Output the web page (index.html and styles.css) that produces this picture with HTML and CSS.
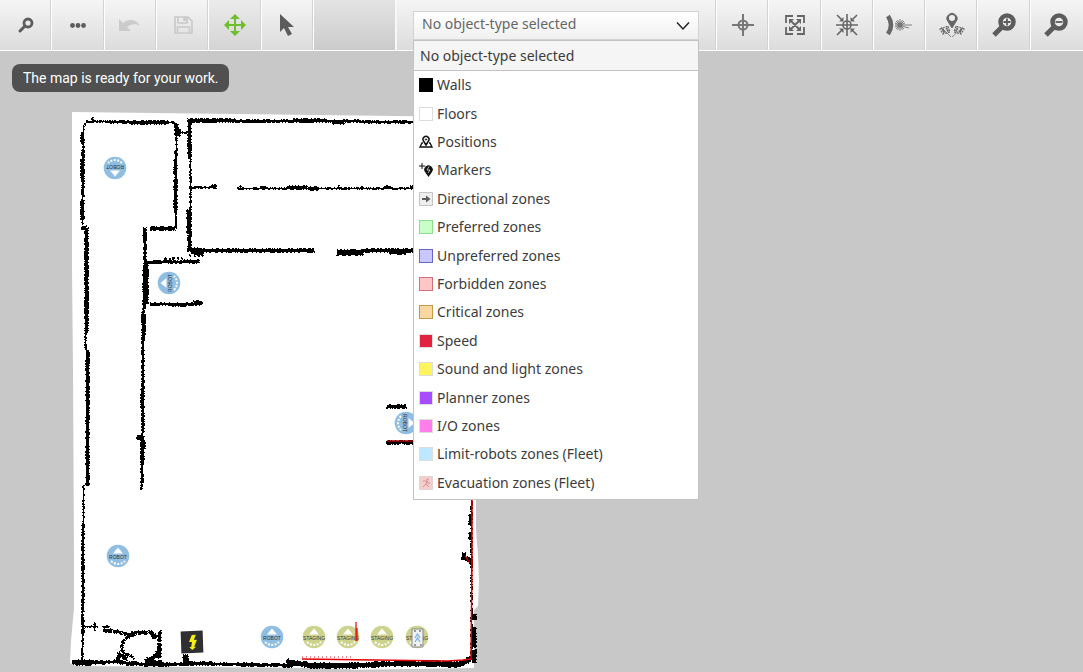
FILE: index.html
```html
<!DOCTYPE html>
<html lang="en">
<head>
<meta charset="utf-8">
<title>Map editor</title>
<link rel="stylesheet" href="styles.css">
</head>
<body>
<header class="toolbar">
  <div class="tools tools-left">
    <button class="tool" aria-label="Search"><svg width="32" height="32" viewBox="0 0 32 32"><circle cx="18" cy="14" r="4" fill="none" stroke="#5c5c5c" stroke-width="2.8"/><path d="M15 17l-5 5" stroke="#5c5c5c" stroke-width="3" stroke-linecap="round"/></svg></button>
    <button class="tool" aria-label="More"><svg width="32" height="32" viewBox="0 0 32 32" fill="#5c5c5c"><circle cx="10.500" cy="16.500" r="2.400"/><circle cx="16" cy="16.500" r="2.400"/><circle cx="21.500" cy="16.500" r="2.400"/></svg></button>
    <button class="tool" aria-label="Undo" disabled><svg width="32" height="32" viewBox="0 0 32 32" fill="#cbcbcb"><path d="M5 10v12h12l-4-4c3-3 9-4 13-1-3-7-12-8-17-3z"/></svg></button>
    <button class="tool" aria-label="Save" disabled><svg width="32" height="32" viewBox="0 0 32 32" fill="none" stroke="#c9c9c9" stroke-width="1.600"><path d="M8 8h13l4 4v12H8zM11 8v6h9V8M10.500 24v-6h12v6"/><path d="M17.500 8v4" stroke-width="2.500"/></svg></button>
    <button class="tool tool-active" aria-label="Pan"><svg width="32" height="32" viewBox="0 0 32 32"><path d="M16 8v16M8 16h16" stroke="#6fbe2e" stroke-width="2"/><path d="M16 5l-5 5h10zM16 27l-5-5h10zM5 16l5-5v10zM27 16l-5-5v10z" fill="#6fbe2e"/></svg></button>
    <button class="tool" aria-label="Select"><svg width="32" height="32" viewBox="0 0 32 32"><path d="M9 5v18l4-4 4 8 4-2-4-7h6z" fill="#5c5c5c"/></svg></button>
  </div>
  <div class="filler"></div>
  <div class="picker-area">
    <div class="picker">
      <select class="picker-select" aria-label="Object type"><option>No object-type selected</option></select>
      <svg class="chevron" width="14" height="10" viewBox="0 0 14 10"><path d="M1 1.500l6 6.500 6-6.500" fill="none" stroke="#222" stroke-width="1.500"/></svg>
      <div class="menu" role="listbox" aria-label="Object types">
        <div class="menu-head" role="option" aria-selected="true">No object-type selected</div>
        <div class="menu-rows">
          <div class="row" role="option"><span class="swatch walls"></span>Walls</div>
          <div class="row" role="option"><span class="swatch floors"></span>Floors</div>
          <div class="row" role="option"><svg class="glyph" width="14" height="14" viewBox="0 0 14 14" fill="none" stroke="#111"><path d="M4 8H3l-2 4h12l-2-4h-1" stroke-width="1.300"/><path d="M7 10L4.500 6a3 3 0 1 1 5 0z" stroke-width="1.500"/><circle cx="7" cy="4.500" r=".7"/></svg>Positions</div>
          <div class="row" role="option"><svg class="glyph" width="14" height="14" viewBox="0 0 14 14"><path d="M9.500 14L6 9a4.200 4.200 0 1 1 7 0z" fill="#111"/><path d="M0 3h6M3 0v6" stroke="#111"/><path d="M10 3.500L8 7h3L9 10" fill="none" stroke="#fff" stroke-width=".7"/></svg>Markers</div>
          <div class="row" role="option"><svg class="glyph" width="14" height="14" viewBox="0 0 14 14"><path d="M.5.5h13v13H.5z" fill="#eee" stroke="#c4c4c4"/><path d="M3 6h4V3.500L11.500 7 7 10.500V8H3z" fill="#5c5c5c"/></svg>Directional zones</div>
          <div class="row" role="option"><span class="swatch preferred"></span>Preferred zones</div>
          <div class="row" role="option"><span class="swatch unpreferred"></span>Unpreferred zones</div>
          <div class="row" role="option"><span class="swatch forbidden"></span>Forbidden zones</div>
          <div class="row" role="option"><span class="swatch critical"></span>Critical zones</div>
          <div class="row" role="option"><span class="swatch speed"></span>Speed</div>
          <div class="row" role="option"><span class="swatch sound"></span>Sound and light zones</div>
          <div class="row" role="option"><span class="swatch planner"></span>Planner zones</div>
          <div class="row" role="option"><span class="swatch io"></span>I/O zones</div>
          <div class="row" role="option"><span class="swatch limit"></span>Limit-robots zones (Fleet)</div>
          <div class="row" role="option"><svg class="glyph" width="14" height="14" viewBox="0 0 14 14"><path d="M.5.5h13v13H.5z" fill="#f4cdcd" stroke="#e3d3d3"/><circle cx="8.500" cy="3.500" r="1" fill="#dd8d8d"/><path d="M4 5l4 0-1 3 3 3M7 8l-3 3M8 5l1 2h2" fill="none" stroke="#dd8d8d"/></svg>Evacuation zones (Fleet)</div>
        </div>
      </div>
    </div>
  </div>
  <div class="tools tools-right">
    <button class="tool" aria-label="Center"><svg width="32" height="32" viewBox="0 0 32 32" fill="none" stroke="#777" stroke-width="2"><circle cx="16" cy="16" r="4.500"/><path d="M16 5v22M5 16h22"/></svg></button>
    <button class="tool" aria-label="Fit map"><svg width="32" height="32" viewBox="0 0 32 32"><path d="M14 7H7v7M18 7h7v7M14 25H7v-7M18 25h7v-7M12 12l8 8M20 12l-8 8" fill="none" stroke="#666" stroke-width="1.800"/><path d="M10 10h5l-5 5zM22 10h-5l5 5zM10 22h5l-5-5zM22 22h-5l5-5z" fill="#666"/></svg></button>
    <button class="tool" aria-label="Center on robot"><svg width="32" height="32" viewBox="0 0 32 32"><g fill="none" stroke="#666" stroke-width="1.600"><circle cx="16" cy="16" r="4"/><path d="M16 5v22M5 16h22M6 6l5 5M26 6l-5 5M6 26l5-5M26 26l-5-5"/></g><path d="M12.500 12.500H8l4.500-4.500zM19.500 12.500H24L19.500 8zM12.500 19.500H8l4.500 4.500zM19.500 19.500H24L19.500 24z" fill="#666"/></svg></button>
    <button class="tool" aria-label="Laser"><svg width="32" height="32" viewBox="0 0 32 32" fill="none" stroke="#666"><path d="M5 7q6 9 0 18" stroke-width="4.500"/><path d="M12 16h17M17 10v12M13 12l8 8M21 12l-8 8M14.500 11l5 10M19.500 11l-5 10M12 14l10 4M12 18l10-4M22 18l4 1" stroke-width=".8"/><circle cx="17" cy="16" r="2.500" fill="#777" stroke="none"/></svg></button>
    <button class="tool" aria-label="Go to position"><svg width="32" height="32" viewBox="0 0 32 32"><path d="M16 19l-4-6.500a5 5 0 1 1 8 0z" fill="#666" stroke="#666"/><circle cx="16" cy="9" r="3" fill="#eee"/><path d="M5 18l10 10M27 18l-11 10" stroke="#888"/><path d="M4 20l8-3 2 6-7 2zM28 20l-8-3-2 6 7 2z" fill="none" stroke="#666" stroke-width="1.200" stroke-dasharray="2 1"/><path d="M6 21l7-2M7 23l7-2M26 21l-7-2M25 23l-7-2" stroke="#666" stroke-width="2" stroke-dasharray="2 2"/></svg></button>
    <button class="tool" aria-label="Zoom in"><svg width="32" height="32" viewBox="0 0 32 32" fill="none" stroke="#5c5c5c"><circle cx="19" cy="13" r="6.500" stroke-width="4.500"/><path d="M14 18L6 26" stroke-width="5"/><path d="M19 9.500v7M15.500 13h7" stroke-width="1.800"/></svg></button>
    <button class="tool" aria-label="Zoom out"><svg width="32" height="32" viewBox="0 0 32 32" fill="none" stroke="#5c5c5c"><circle cx="18" cy="13" r="6.500" stroke-width="4.500"/><path d="M13 18L5 26" stroke-width="5"/><path d="M14.500 13h7" stroke-width="1.800"/></svg></button>
  </div>
</header>
<main class="stage">
  <svg class="map" width="420" height="572" viewBox="70 110 420 572" role="img" aria-label="Floor map">
    <defs>
      <filter id="rough" filterUnits="userSpaceOnUse" x="60" y="105" width="430" height="577"><feTurbulence type="turbulence" baseFrequency=".35" numOctaves="2" seed="4"/><feDisplacementMap in="SourceGraphic" scale="2" xChannelSelector="R" yChannelSelector="G"/></filter>
      <g id="pin"><circle r="11.300"/><path d="M-5-2.500L0-8.500 5-2.500z" fill="#fff"/><path d="M-7 5Q0 11 7 5" fill="none" stroke="#fff" stroke-width="2" stroke-dasharray="2 1.500"/></g>
    </defs>
    <path d="M72 112L480 117V500h-4v30l2 25 1 25-1 26-4 4v58l-135 2-15-2-248-2-6-3 1-22 3-33V560l-1-190-1-100z" fill="#fff"/>
    <path d="M325 669h25l6 3h-26z" fill="#c8c8c8"/>
    <g filter="url(#rough)">
      <g class="walls-ink" transform="translate(-1 -1)">
      <path d="M83 225l1-99 4-4 86 1 3 3-1 103" stroke-width="2.500"/>
      <path d="M83 133v12M83 160v22M83 200v20M177 124v12M176 160v15M176 180v30M130 123h40M92 120h2" stroke-width="3.500"/>
      <path d="M82 228h5M150 229h26" stroke-width="4"/>
      <path d="M87 228v105" stroke-width="3.500"/><path d="M86 330v20" stroke-width="1.500"/>
      <path d="M88 350v136M87 260v40" stroke-width="4"/>
      <path d="M84 485L83 662" stroke-width="2.500"/>
      <path d="M145 228v38l-1 45-1 125" stroke-width="3"/><path d="M145 232v12M144 315v20M143 390v20" stroke-width="4"/>
      <path d="M147 262v43" stroke-width="4.500"/><path d="M137 438h8M143 436v20" stroke-width="4"/><path d="M141 440l5 0-3 52-2-2z" fill="#000" stroke="none"/>
      <path d="M178 133h9M180 129v8" stroke-width="2.500"/>
      <path d="M148 262h52M150 304h52" stroke-width="3"/><path d="M163 262h10M185 262h15M170 305h18M194 303h9" stroke-width="4.500"/>
      <path d="M165 259h20M190 256h15" stroke-width="1.500" stroke-dasharray="2 2"/>
      <path d="M190 159v-38h46M189 210v24M190 236v14h10" stroke-width="4.500"/>
      <path d="M191 150v100" stroke-width="2.500"/>
      <path d="M235 121h60l130 2" stroke-width="3"/><path d="M293 121h34M333 123h12" stroke-width="4"/>
      <path d="M191 188h24M238 189h180" stroke-width="2.500"/><path d="M211 187h6M287 188h21M309 189h9M260 188h6M384 188h8M410 188h5" stroke-width="4.500"/><path d="M241 186v3M339 185v4M363 186v3" stroke-width="2.500"/>
      <path d="M190 251h125M363 251h55" stroke-width="3.500"/><path d="M192 252h13M337 253h27M390 252h16" stroke-width="5.500"/>
      <path d="M387 408l8-1h12M390 407h4M387 443h31M396 443h8" stroke-width="3.500"/>
      <path d="M84 620v14M84 627h15M102 627h8M95 623v8" stroke-width="2.500"/><path d="M103 631h8l12 2 10 3" stroke-width="3.500" stroke-dasharray="9 1"/>
      <path d="M128 637l8-4h14l5 4 5-3v25" stroke-width="4.500" stroke-dasharray="10 1"/><path d="M129 637q-10 6-5 16l11 6" stroke-width="3" stroke-dasharray="4 1"/><path d="M118 661l2-6 8 5M145 661q14-2 14-12" stroke-width="4"/>
      <path d="M73 663h28l16-1 12 2 30 1 40-1 50 1 45 1" stroke-width="3.500"/><path d="M76 663h15M145 664h18M186 655v8" stroke-width="6"/>
      <path d="M287 662l25 4h40l50-2 55 1 9-3 6-4" stroke-width="5.500"/><path d="M472 495v165" stroke-width="2"/><path d="M471 515v10M471 533v8M475 614v6M475 628v20M475 650v14" stroke-width="4"/><path d="M464 553v6l4 0 4 4" stroke-width="4"/>
      </g>
    </g>
    <path d="M472 500v56l0 7-1 96-8 1-15 1-146-2" fill="none" stroke="#e30000" stroke-width="1.500"/><path d="M465 556l5 7M423 661h16M387 441h26" stroke="#a60000" stroke-width="1.500"/><path d="M302 657h50" stroke="#b22" stroke-dasharray="1 3"/>
    <g class="pins" fill="#90bde2">
      <g transform="translate(115 168) rotate(180)"><use href="#pin"/><text y="3">ROBOT</text></g>
      <g transform="translate(169 283) rotate(-90)"><use href="#pin"/><text y="3">ROBOT</text></g>
      <g transform="translate(406 423) rotate(90)"><use href="#pin"/><text y="3">ROBOT</text></g>
      <g transform="translate(118 556)"><use href="#pin"/><text y="3">ROBOT</text></g>
      <g transform="translate(272 637)"><use href="#pin"/><text y="3">ROBOT</text></g>
    </g>
    <g class="pins" fill="#cdd38d">
      <g transform="translate(314 637)"><use href="#pin"/><text y="3">STAGING</text></g>
      <g transform="translate(348 637)"><use href="#pin"/><text y="3">STAGING</text></g>
      <g transform="translate(382 637)"><use href="#pin"/><text y="3">STAGING</text></g>
      <g transform="translate(417 637)"><use href="#pin"/><text y="3">STAGING</text></g>
    </g>
    <path d="M356 622v19M357 628v13" stroke="#e31b12" stroke-width="1.300"/>
    <path d="M412 629h11v18h-11z" fill="#eef2f5" stroke="#888"/><path d="M414 631h2M414 645h2M420 645h2M419 631h2" stroke="#444"/><path d="M415 638l2.500-4 2.500 4M415 642l2.500-4 2.500 4" fill="none" stroke="#7aaedb" stroke-width="1.200"/>
    <g transform="rotate(-2 192 642)"><path d="M181 631h22v22h-22z" fill="#303032"/><path d="M192 635h4l-2 5h3l-3 7h2l-4 3-3-3h2l1-5h-3z" fill="#f4ee14"/></g>
  </svg>
  <p class="toast" role="status">The map is ready for your work.</p>
</main>
</body>
</html>
```
FILE: styles.css
```css
* { box-sizing: border-box; }
body {
  margin: 0;
  height: 100vh;
  overflow: hidden;
  display: flex;
  flex-direction: column;
  background: #c8c8c8;
  font: 14px/20px "Noto Sans", sans-serif;
  color: #3c3c3c;
}
.toolbar {
  display: flex;
  flex: none;
  height: 51px;
  border-bottom: 1px solid #fff;
  background: linear-gradient(#f5f5f5, #dcdcdc);
}
.tools { display: grid; flex: none; }
.tools-left { width: 314px; grid-template-columns: repeat(6, 1fr); }
.tools-right { width: 366px; grid-template-columns: repeat(7, 1fr); }
.tool {
  display: flex;
  align-items: center;
  justify-content: center;
  padding: 0;
  border: 0;
  border-right: 1px solid #fff;
  box-shadow: inset -1px 0 #d2d2d2;
  background: none;
}
.tools-right .tool:last-child { border-right: 0; box-shadow: none; }
.tool-active { background: linear-gradient(#ebebeb, #d4d4d4); }
.filler {
  flex: none;
  width: 83px;
  border-right: 2px solid #f8f8f8;
  background: linear-gradient(#e4e4e4, #cbcbcb);
}
.picker-area {
  flex: 1;
  padding: 11px 17px 0 16px;
  border-right: 1px solid #fff;
  box-shadow: inset -1px 0 #d2d2d2;
}
.picker { position: relative; }
.picker-select {
  display: block;
  width: 100%;
  height: 29px;
  padding: 0 32px 3px 8px;
  appearance: none;
  border: 1px solid #d3d3d3;
  border-radius: 0;
  background: linear-gradient(#fff, #f0f0f0);
  color: #666;
  font: inherit;
}
.chevron { position: absolute; top: 10px; right: 9px; pointer-events: none; }
.menu {
  position: absolute;
  z-index: 2;
  top: 29px;
  left: 0;
  right: 0;
  border: 1px solid #c3c3c3;
  background: #fff;
}
.menu-head {
  height: 30px;
  padding: 5px 6px;
  border-bottom: 1px solid #c3c3c3;
  background: #f5f5f5;
}
.menu-rows { display: grid; grid-template-rows: repeat(15, 1fr); height: 428px; padding-bottom: 2px; }
.row { display: flex; align-items: center; gap: 4px; padding: 0 5px; }
.swatch { width: 14px; height: 14px; border: 1px solid #ddd; }
.walls { background: #000; border-color: #000; }
.floors { background: #fff; }
.preferred { background: #c8ffc8; border-color: #8fdd8f; }
.unpreferred { background: #c8c8ff; border-color: #6a64cd; }
.forbidden { background: #ffc6c8; border-color: #cf7277; }
.critical { background: #f8d7a0; border-color: #c49a48; }
.speed { background: #e3223f; }
.sound { background: #fff45c; }
.planner { background: #a74dff; }
.io { background: #ff7dec; }
.limit { background: #bde8ff; }
.stage { position: relative; flex: 1; }
.map { position: absolute; top: 59px; left: 70px; }
.walls-ink { fill: none; stroke: #000; shape-rendering: crispEdges; }
.pins text { fill: #333; font: 5px "Liberation Sans", sans-serif; text-anchor: middle; }
.toast {
  position: absolute;
  top: 13px;
  left: 12px;
  margin: 0;
  padding: 4px 11px;
  border-radius: 8px;
  background: #505050;
  color: #fff;
  font: 14px/20px Roboto, sans-serif;
}
```
